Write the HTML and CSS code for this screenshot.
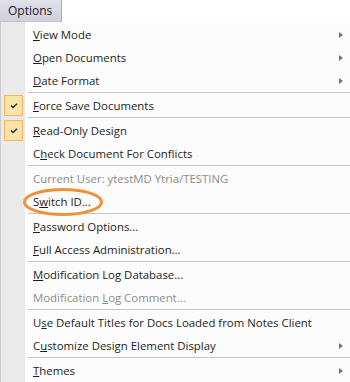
FILE: index.html
```html
<!DOCTYPE html>
<html lang="en">
<head>
    <meta charset="UTF-8">
    <title>Options</title>
    <link rel="stylesheet" href="styles.css">
</head>
<body>
    <div class="menubar">
        <div class="tab">Options</div>
    </div>

    <div class="menu">
        <div class="item"><span class="gutter"></span><span class="label"><u>V</u>iew Mode</span><span class="arrow"></span></div>
        <div class="item"><span class="gutter"></span><span class="label"><u>O</u>pen Documents</span><span class="arrow"></span></div>
        <div class="item"><span class="gutter"></span><span class="label"><u>D</u>ate Format</span><span class="arrow"></span></div>
        <div class="sep"></div>
        <div class="item"><span class="gutter"><span class="check"><svg width="8" height="6" viewBox="0 0 8 6"><polyline points="1,2.5 3,4.5 7,0.8" fill="none" stroke="#1f2a44" stroke-width="1.4"/></svg></span></span><span class="label"><u>F</u>orce Save Documents</span></div>
        <div class="sep"></div>
        <div class="item"><span class="gutter"><span class="check"><svg width="8" height="6" viewBox="0 0 8 6"><polyline points="1,2.5 3,4.5 7,0.8" fill="none" stroke="#1f2a44" stroke-width="1.4"/></svg></span></span><span class="label"><u>R</u>ead-Only Design</span></div>
        <div class="item"><span class="gutter"></span><span class="label">C<u>h</u>eck Document For Conflicts</span></div>
        <div class="sep"></div>
        <div class="item disabled"><span class="gutter"></span><span class="label">Current User: ytestMD Ytria/TESTING</span></div>
        <div class="item marked"><span class="gutter"></span><span class="label">S<u>w</u>itch ID...</span>
            <svg class="circle" width="84" height="32" viewBox="0 0 84 32"><ellipse cx="42" cy="16" rx="38.5" ry="12.5" fill="none" stroke="#f0913a" stroke-width="3"/></svg>
        </div>
        <div class="sep"></div>
        <div class="item"><span class="gutter"></span><span class="label"><u>P</u>assword Options...</span></div>
        <div class="item"><span class="gutter"></span><span class="label"><u>F</u>ull Access Administration...</span></div>
        <div class="sep"></div>
        <div class="item"><span class="gutter"></span><span class="label"><u>M</u>odification Log Database...</span></div>
        <div class="item disabled"><span class="gutter"></span><span class="label">Modification <u>L</u>og Comment...</span></div>
        <div class="sep"></div>
        <div class="item"><span class="gutter"></span><span class="label">U<u>s</u>e Default Titles for Docs Loaded from Notes Client</span></div>
        <div class="item"><span class="gutter"></span><span class="label">C<u>u</u>stomize Design Element Display</span><span class="arrow"></span></div>
        <div class="sep"></div>
        <div class="item"><span class="gutter"></span><span class="label"><u>T</u>hemes</span><span class="arrow"></span></div>
    </div>
</body>
</html>
```

FILE: styles.css
```css
body {
    margin: 0;
    width: 350px;
    height: 382px;
    overflow: hidden;
    background-color: #fff;
    font-family: "Segoe UI", "Open Sans", sans-serif;
    font-size: 11.4px;
    color: #1e1e1e;
}
u {
    text-decoration-thickness: 1px;
    text-underline-offset: 1px;
}
.menubar {
    height: 22px;
    display: flex;
}
.tab {
    width: 53px;
    padding-left: 8px;
    line-height: 21px;
    background: linear-gradient(#e2e2ec, #cfcfdd);
    border-right: 1px solid #a9a9b8;
    border-bottom: 1px solid #c3c3cf;
    font-size: 12px;
    color: #1b1b1b;
}
.menu {
    padding-top: 1px;
    border-left: 1px solid #cbcbcb;
    background: linear-gradient(to right, #eaeaea 0, #eaeaea 24px, #fcfcfc 24px);
}
.item {
    position: relative;
    height: 23px;
    display: flex;
    align-items: center;
    padding-right: 7px;
}
.gutter {
    width: 24px;
    height: 23px;
    display: flex;
    align-items: center;
}
.label {
    padding-left: 8px;
    white-space: nowrap;
}
.disabled {
    color: #8c8c8c;
}
.arrow {
    margin-left: auto;
    width: 0;
    height: 0;
    border-left: 4px solid #737373;
    border-top: 3.5px solid transparent;
    border-bottom: 3.5px solid transparent;
}
.check {
    margin-left: 3px;
    width: 17px;
    height: 19px;
    display: flex;
    align-items: center;
    justify-content: center;
    background: #fde4a6;
    border: 1px solid #f3b463;
}
.sep {
    height: 1px;
    margin: 0 0 1px 27px;
    background-color: #c6c6c6;
}
.marked .circle {
    position: absolute;
    left: 20px;
    top: -4px;
    z-index: 2;
}
```
